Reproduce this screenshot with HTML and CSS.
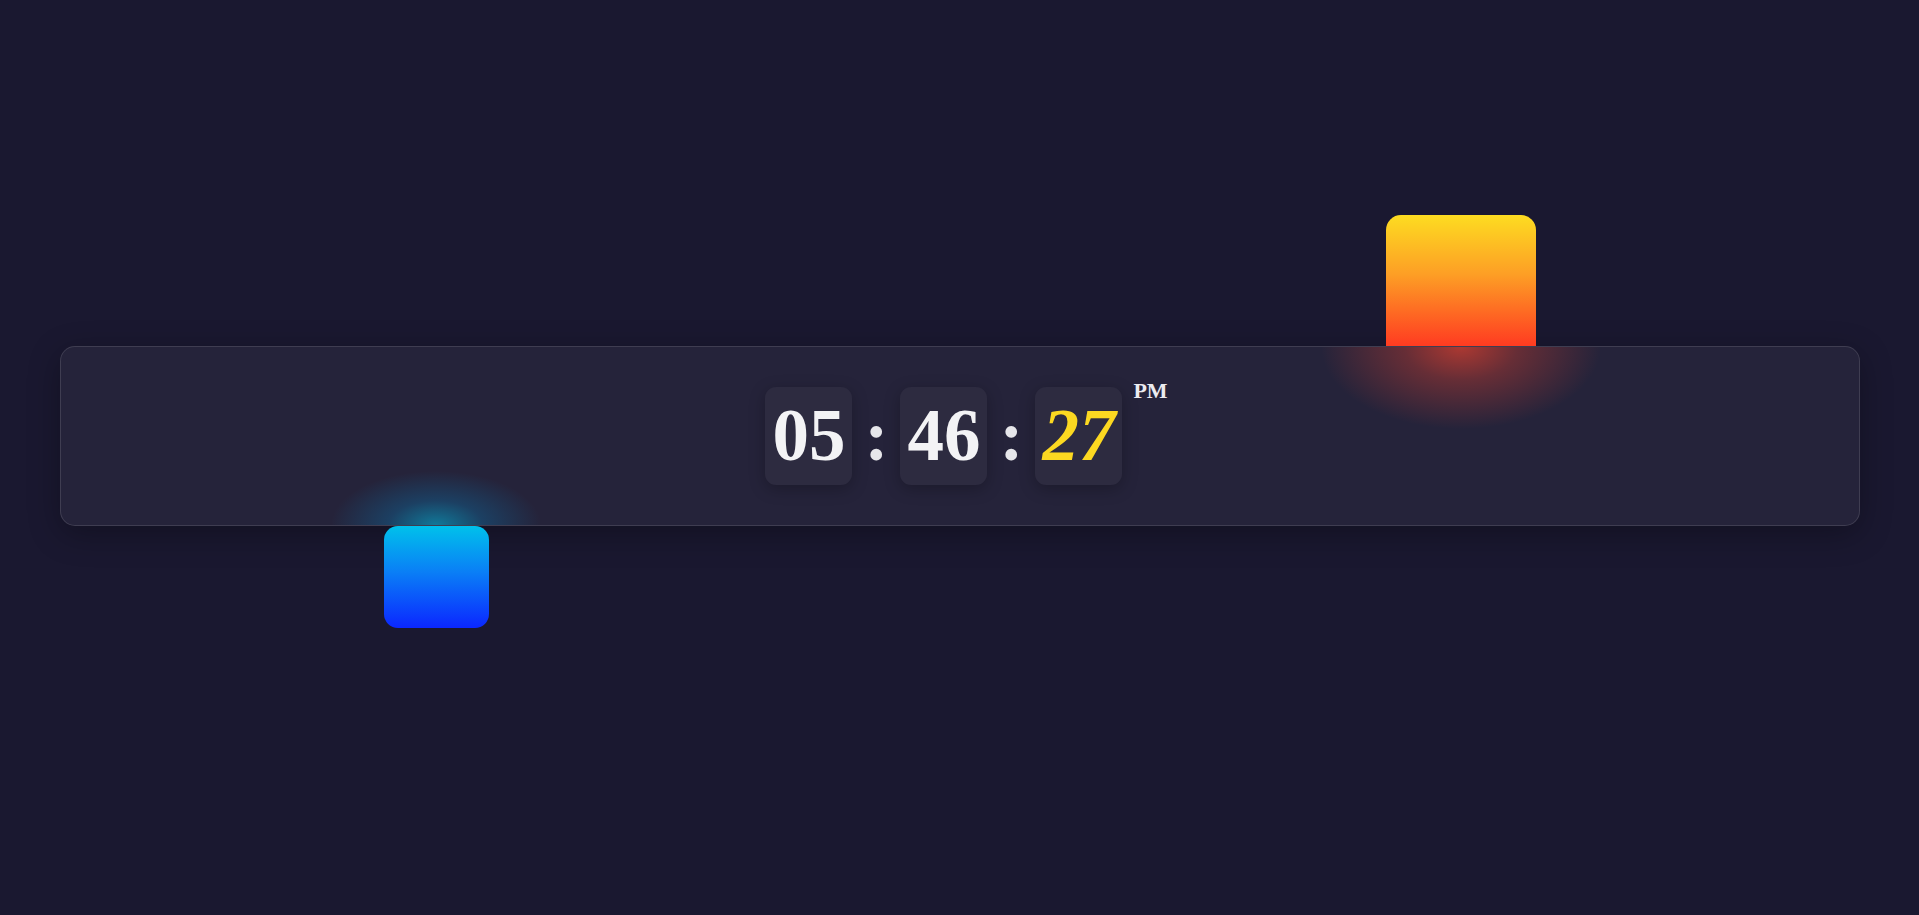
FILE: index.html
```html
<!DOCTYPE html>
<html lang="en">
<head>
<meta charset="utf-8">
<title>Clock</title>
<link rel="stylesheet" href="styles.css">
</head>
<body>
<div class="stage">
  <div class="shape shape-orange"></div>
  <div class="shape shape-blue"></div>
  <div class="panel">
    <div class="glow glow-orange"></div>
    <div class="glow glow-blue"></div>
    <div class="clock">
      <div class="unit"><span class="digits">05</span></div>
      <div class="sep">:</div>
      <div class="unit"><span class="digits">46</span></div>
      <div class="sep">:</div>
      <div class="unit"><span class="digits seconds">27</span></div>
      <div class="ampm">PM</div>
    </div>
  </div>
</div>
</body>
</html>
```
FILE: styles.css
```css
html, body {
  margin: 0;
  padding: 0;
}
body {
  background: #1a1830;
  min-height: 100vh;
  font-family: "Liberation Serif", "Times New Roman", serif;
  overflow: hidden;
}
.stage {
  position: relative;
  height: 915px;
  padding-top: 346px;
  box-sizing: border-box;
}
.shape {
  position: absolute;
  z-index: 2;
}
.shape-orange {
  left: 1386px;
  top: 215px;
  width: 150px;
  height: 131px;
  border-radius: 15px 15px 0 0;
  background: linear-gradient(180deg, #fddc21 0%, #fd9f25 45%, #ff3b21 100%);
}
.shape-blue {
  left: 384px;
  top: 526px;
  width: 105px;
  height: 102px;
  border-radius: 14px;
  background: linear-gradient(180deg, #00c1eb 0%, #0a7ff6 45%, #0b27ff 100%);
}
.panel {
  position: relative;
  z-index: 1;
  margin: 0 59px 0 60px;
  height: 180px;
  box-sizing: border-box;
  border: 1px solid rgba(255, 255, 255, 0.12);
  border-radius: 15px;
  background: #25233a;
  box-shadow: 0 8px 32px rgba(0, 0, 0, 0.3);
  display: flex;
  align-items: center;
  justify-content: center;
  overflow: hidden;
}
.glow {
  position: absolute;
  pointer-events: none;
}
.glow-orange {
  left: 1250px;
  top: 0;
  width: 300px;
  height: 110px;
  background: radial-gradient(ellipse 140px 82px at 50% 0%, rgba(255, 70, 45, 0.62) 0%, rgba(255, 70, 45, 0.3) 40%, rgba(255, 70, 45, 0) 100%);
}
.glow-blue {
  left: 255px;
  bottom: 0;
  width: 240px;
  height: 80px;
  background: radial-gradient(ellipse 105px 54px at 50% 100%, rgba(0, 190, 230, 0.55) 0%, rgba(0, 150, 220, 0.25) 45%, rgba(0, 150, 220, 0) 100%);
}
.clock {
  position: relative;
  display: flex;
  align-items: center;
  padding-left: 13px;
}
.unit {
  width: 87px;
  height: 98px;
  border-radius: 11px;
  background: #2d2b40;
  box-shadow: 0 4px 16px rgba(0, 0, 0, 0.25);
  display: flex;
  align-items: center;
  justify-content: center;
}
.digits {
  font-size: 73px;
  font-weight: 700;
  color: #f3f3f5;
  line-height: normal;
}
.seconds {
  color: #fcd821;
  font-style: italic;
}
.sep {
  width: 48px;
  text-align: center;
  font-size: 72px;
  font-weight: 700;
  color: #e6e6ea;
  line-height: normal;
}
.ampm {
  align-self: flex-start;
  margin-left: 11px;
  margin-top: -7px;
  font-size: 22px;
  font-weight: 700;
  line-height: 1;
  color: #ececf0;
}
```
